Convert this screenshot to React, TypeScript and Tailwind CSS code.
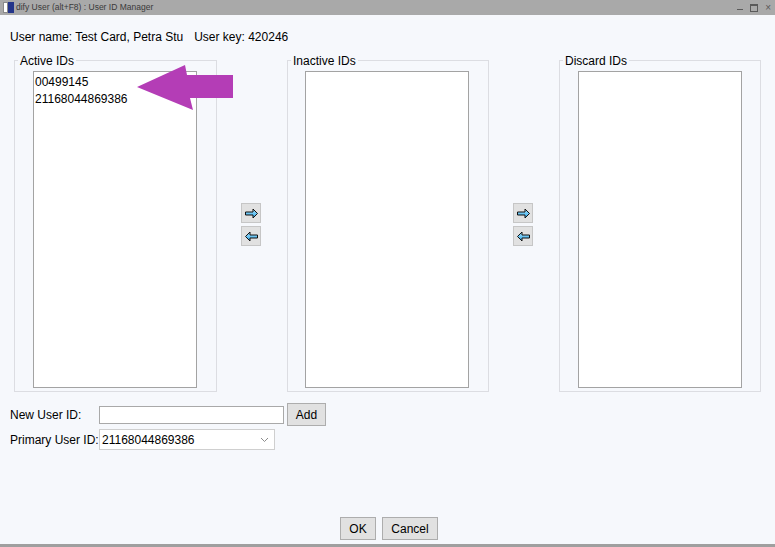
import React from "react";

function ArrowButton({ dir }: { dir: "right" | "left" }) {
  const pts =
    dir === "right"
      ? "1.5,4 9,4 9,1 13.5,5.5 9,10 9,7 1.5,7"
      : "13.5,4 6,4 6,1 1.5,5.5 6,10 6,7 13.5,7";
  return (
    <button className="w-[20px] h-[20px] flex items-center justify-center bg-[#e1e1e1] border border-[#c6c6c6]">
      <svg width="15" height="11" viewBox="0 0 15 11">
        <defs>
          <linearGradient id={`g-${dir}`} x1="0" y1="0" x2="0" y2="1">
            <stop offset="0" stopColor="#a9e4ff" />
            <stop offset="1" stopColor="#2fa6e6" />
          </linearGradient>
        </defs>
        <polygon points={pts} fill={`url(#g-${dir})`} stroke="#111" strokeWidth="1" strokeLinejoin="miter" />
      </svg>
    </button>
  );
}

function GroupBox({ title, items, width, inset }: { title: string; items: string[]; width: string; inset: string }) {
  return (
    <fieldset className={`${width} h-[339px] border border-[#dcdde2] pt-[4px]`}>
      <legend className="ml-[3px] px-[2px] text-[12px] leading-[14px] text-black">
        <span className="relative top-[1px]">{title}</span>
      </legend>
      <div className={`${inset} w-[164px] h-[317px] bg-white border border-[#a3a3a3] pt-[2px] pl-[1px] text-[12px] leading-[17px] text-black`}>
        {items.map((it) => (
          <div key={it}>{it}</div>
        ))}
      </div>
    </fieldset>
  );
}

function MoveButtons() {
  return (
    <div className="w-[20px] pt-[150px] flex flex-col gap-[3px]">
      <ArrowButton dir="right" />
      <ArrowButton dir="left" />
    </div>
  );
}

export default function App() {
  return (
    <div
      className="relative w-[775px] h-[547px] bg-[#f6f8fc] flex flex-col overflow-hidden text-black"
      style={{ fontFamily: '"Liberation Sans", Arial, sans-serif' }}
    >
      {/* title bar */}
      <div className="h-[15px] bg-[#a9a9a9] flex items-center shrink-0">
        <div className="ml-[3px] w-[5px] h-[11px] bg-white border border-[#8a8a8a]" />
        <div className="w-[6px] h-[11px] bg-[#24358a]" />
        <span className="ml-[2px] text-[8.5px] leading-[15px] text-[#3a3a3a]">dify User (alt+F8) : User ID Manager</span>
        <div className="ml-auto mr-[4px] flex items-center gap-[7px] text-[#5a5a5a]">
          <div className="w-[6px] h-[1px] bg-[#5a5a5a] mt-[4px]" />
          <div className="w-[8px] h-[8px] border border-[#5a5a5a] border-t-2" />
          <span className="text-[10px] leading-[10px]">×</span>
        </div>
      </div>

      {/* user info */}
      <div className="h-[38px] pt-[15px] pl-[10px] flex items-start gap-[11px] text-[12px] leading-[14px]">
        <span>User name: Test Card, Petra Stu</span>
        <span>User key: 420246</span>
      </div>

      {/* id columns */}
      <div className="pl-[14px] flex items-start">
        <GroupBox title="Active IDs" items={["00499145", "21168044869386"]} width="w-[203px]" inset="ml-[18px]" />
        <div className="w-[24px]" />
        <MoveButtons />
        <div className="w-[26px]" />
        <GroupBox title="Inactive IDs" items={[]} width="w-[202px]" inset="ml-[17px]" />
        <div className="w-[24px]" />
        <MoveButtons />
        <div className="w-[26px]" />
        <GroupBox title="Discard IDs" items={[]} width="w-[202px]" inset="ml-[18px]" />
      </div>

      {/* new / primary id */}
      <div className="mt-[11px] pl-[10px] flex flex-col gap-[3px] text-[12px]">
        <div className="flex items-center h-[23px]">
          <span className="w-[89px]">New User ID:</span>
          <div className="w-[185px] h-[18px] bg-white border border-[#a9a9a9]" />
          <button className="ml-[3px] w-[39px] h-[23px] bg-[#e1e1e1] border border-[#adadad] text-[12px]">Add</button>
        </div>
        <div className="flex items-center h-[21px]">
          <span className="w-[89px]">Primary User ID:</span>
          <div className="w-[176px] h-[21px] bg-white border border-[#cfcfcf] flex items-center pl-[2px] pr-[5px]">
            <span>21168044869386</span>
            <svg className="ml-auto" width="9" height="6" viewBox="0 0 9 6">
              <polyline points="1,1 4.5,4.5 8,1" fill="none" stroke="#8c8c8c" strokeWidth="1" />
            </svg>
          </div>
        </div>
      </div>

      {/* ok / cancel */}
      <div className="mt-auto mb-[4px] flex justify-center gap-[6px] pl-[3px] text-[12px]">
        <button className="w-[36px] h-[23px] bg-[#e1e1e1] border border-[#adadad]">OK</button>
        <button className="w-[56px] h-[23px] bg-[#e1e1e1] border border-[#adadad]">Cancel</button>
      </div>
      <div className="h-[3px] bg-[#9f9f9f] shrink-0" />

      {/* annotation arrow */}
      <svg className="absolute left-0 top-0 pointer-events-none" width="775" height="547">
        <polygon points="137,87 185,65 187,75 233,75 233,98 190,98 193,110" fill="#b43db6" />
      </svg>
    </div>
  );
}
